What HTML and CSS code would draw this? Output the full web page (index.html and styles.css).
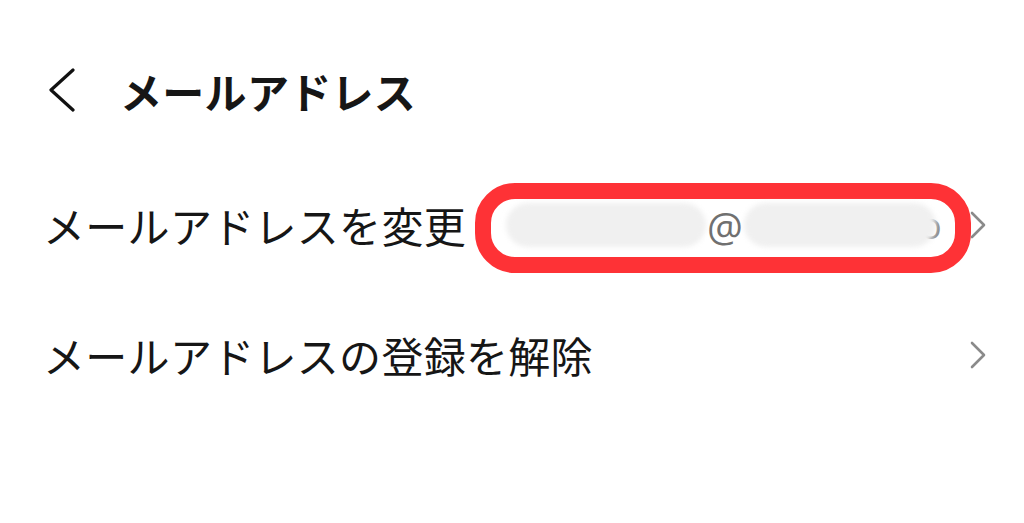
FILE: index.html
```html
<!DOCTYPE html>
<html lang="ja">
<head>
<meta charset="utf-8">
<link rel="stylesheet" href="styles.css">
</head>
<body>
<div class="page">
  <header class="header">
    <svg class="back" width="32" height="46" viewBox="0 0 32 46">
      <path d="M27 2 L5 22 L27 42" fill="none" stroke="#111" stroke-width="3.2" stroke-linecap="round" stroke-linejoin="round"/>
    </svg>
    <h1 class="title">メールアドレス</h1>
  </header>
  <div class="row">
    <span class="label">メールアドレスを変更</span>
    <span class="value">
      <span class="blob blob1"></span>
      <span class="at">@</span>
      <span class="blob blob2"></span>
      <span class="tail">o</span>
    </span>
    <svg class="chev" width="16" height="28" viewBox="0 0 16 28">
      <path d="M2 2 L14 14 L2 26" fill="none" stroke="#8a8a8a" stroke-width="2.6" stroke-linecap="round" stroke-linejoin="round"/>
    </svg>
    <span class="highlight"></span>
  </div>
  <div class="row">
    <span class="label">メールアドレスの登録を解除</span>
    <span class="spacer"></span>
    <svg class="chev" width="16" height="28" viewBox="0 0 16 28">
      <path d="M2 2 L14 14 L2 26" fill="none" stroke="#8a8a8a" stroke-width="2.6" stroke-linecap="round" stroke-linejoin="round"/>
    </svg>
  </div>
</div>
</body>
</html>
```
FILE: styles.css
```css
html, body {
  margin: 0;
  padding: 0;
  background: #ffffff;
}
body {
  font-family: "Noto Sans CJK JP", "Noto Sans", sans-serif;
  color: #161616;
  width: 1024px;
  height: 523px;
  overflow: hidden;
}
.page {
  display: flex;
  flex-direction: column;
}
.header {
  height: 160px;
  display: flex;
  align-items: center;
  padding: 22px 0 0 46px;
  box-sizing: border-box;
}
.back {
  flex: none;
  width: 32px;
  height: 46px;
}
.title {
  margin: 0 0 0 42px;
  font-size: 42px;
  font-weight: 700;
  letter-spacing: 0.3px;
  line-height: 1;
}
.row {
  position: relative;
  height: 130px;
  display: flex;
  align-items: center;
  padding: 0 38px 0 43px;
  box-sizing: border-box;
}
.label {
  font-size: 42px;
  line-height: 1;
  white-space: nowrap;
  letter-spacing: 0.3px;
}
.value {
  flex: 1;
  display: flex;
  align-items: center;
  margin-left: 40px;
  height: 50px;
}
.spacer {
  flex: 1;
}
.blob {
  display: block;
  height: 44px;
  background: #f0f0f0;
  border-radius: 22px;
  filter: blur(2.5px);
}
.blob1 {
  width: 200px;
}
.blob2 {
  width: 192px;
  position: relative;
  z-index: 1;
}
.at {
  font-family: "Open Sans", "Noto Sans", sans-serif;
  font-size: 40px;
  color: #707070;
  line-height: 1;
  margin: 0 1px -4px 1px;
}
.tail {
  font-family: "Open Sans", "Noto Sans", sans-serif;
  font-size: 36px;
  color: #8a8a8a;
  line-height: 1;
  margin-left: -16px;
  margin-bottom: -2px;
}
.chev {
  flex: none;
  width: 16px;
  height: 28px;
  margin-left: 20px;
}
.highlight {
  position: absolute;
  left: 475px;
  top: 23px;
  width: 496px;
  height: 90px;
  box-sizing: border-box;
  border: 16px solid #fe3236;
  border-radius: 40px;
}
```
